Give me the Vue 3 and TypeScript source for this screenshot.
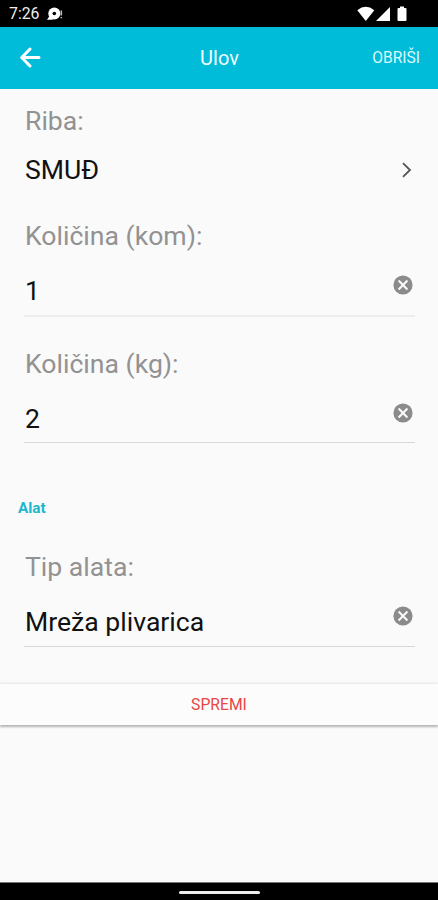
<script setup lang="ts">
import { reactive } from 'vue'

interface Field {
  id: string
  label: string
  value: string
}

const amounts = reactive<Field[]>([
  { id: 'pieces', label: 'Količina (kom):', value: '1' },
  { id: 'weight', label: 'Količina (kg):', value: '2' },
])
const tools = reactive<Field[]>([{ id: 'tool', label: 'Tip alata:', value: 'Mreža plivarica' }])

const groups = [
  { id: 'amounts', title: '', fields: amounts },
  { id: 'tools', title: 'Alat', fields: tools },
]

function clear(field: Field): void {
  field.value = ''
}
</script>

<template>
  <div class="screen">
    <div class="status">
      <span class="time">7:26</span>
      <svg class="notice" width="18" height="14" viewBox="0 0 18 14">
        <circle cx="7.3" cy="6.4" r="6" fill="#fff" />
        <path d="M0 12.8 2.6 9 6 12.8Z" fill="#fff" />
        <circle cx="7.3" cy="6.5" r="1.8" fill="#000" />
        <path d="M14.3 3.5v5M14.3 10v1.3" stroke="#bbb" stroke-width="1.6" />
      </svg>
      <svg class="signals" width="52" height="16" viewBox="0 0 52 16">
        <path d="M.3 4.2Q8.7-2.5 17.3 4.2L8.8 15Z" fill="#fff" />
        <path d="M33 1v14H19Z" fill="#fff" />
        <path d="M43 .5h4v1.6h1.5q1 0 1 1V14q0 1-1 1h-7q-1 0-1-1V3.1q0-1 1-1H43Z" fill="#fff" />
      </svg>
    </div>

    <header class="bar">
      <button class="back" type="button" aria-label="Natrag">
        <svg width="22" height="22" viewBox="0 0 22 22" fill="none" stroke="#fff" stroke-width="3" stroke-linecap="round" stroke-linejoin="round">
          <path d="M11 2 2.7 10.5l8.3 8.5M3 10.5h17" />
        </svg>
      </button>
      <h1 class="title">Ulov</h1>
      <button class="delete" type="button">OBRIŠI</button>
    </header>

    <main class="form">
      <div class="pick">
        <div class="label">Riba:</div>
        <div class="row">
          <span class="value">SMUĐ</span>
          <svg class="chevron" width="12" height="18" viewBox="0 0 12 18" fill="none" stroke="#555" stroke-width="1.8">
            <path d="M2 2.2 9 9l-7 6.8" />
          </svg>
        </div>
      </div>

      <section v-for="group in groups" :key="group.id" :class="['group', group.id]">
        <h2 v-if="group.title" class="heading">{{ group.title }}</h2>
        <div v-for="field in group.fields" :key="field.id" :class="['field', field.id]">
          <div class="label">{{ field.label }}</div>
          <div class="entry">
            <span class="value">{{ field.value }}</span>
            <button class="clear" type="button" aria-label="Obriši polje" @click="clear(field)">
              <svg width="20" height="20" viewBox="0 0 20 20">
                <circle cx="10" cy="10" r="9.6" fill="#8b8b8b" />
                <path d="m5.6 5.6 8.8 8.8m0-8.8-8.8 8.8" stroke="#fafafa" stroke-width="2.1" />
              </svg>
            </button>
          </div>
        </div>
      </section>

      <button class="save" type="button">SPREMI</button>
    </main>

    <div class="nav"><span class="pill"></span></div>
  </div>
</template>

<style>
body {
  margin: 0;
}
</style>

<style scoped>
.screen {
  display: flex;
  flex-direction: column;
  height: 900px;
  background: #fafafa;
  color: #111;
  font-family: Roboto, sans-serif;
  overflow: hidden;
}
button {
  padding: 0;
  border: 0;
  background: none;
  font-family: inherit;
}
svg {
  display: block;
}
.status {
  display: flex;
  align-items: center;
  box-sizing: border-box;
  height: 27px;
  padding: 1px 29px 0 9px;
  background: #000;
  color: #eee;
}
.time {
  width: 38px;
  font-size: 15.8px;
  line-height: 20px;
}
.signals {
  margin-left: auto;
}
.bar {
  display: grid;
  grid-template-columns: 80px 1fr 80px;
  align-items: center;
  box-sizing: border-box;
  height: 62px;
  padding: 0 18px 0 19px;
  background: #00bcd9;
  color: #f2fdff;
}
.title {
  margin: 0;
  text-align: center;
  font-size: 20px;
  font-weight: 400;
  line-height: 24px;
}
.delete {
  justify-self: end;
  color: #dcf8fc;
  font-size: 15.6px;
  line-height: 20px;
  white-space: nowrap;
}
.form {
  flex: 1;
}
.label,
.value {
  font-size: 26.6px;
  line-height: 32px;
  white-space: nowrap;
}
.label {
  color: #929292;
}
.pick {
  padding: 16px 24px 34px 25px;
}
.row {
  display: flex;
  align-items: center;
  justify-content: space-between;
  margin-top: 17px;
}
.chevron {
  margin-right: 1px;
}
.field {
  padding: 0 23px 31px 25px;
}
.entry {
  display: flex;
  justify-content: space-between;
  height: 40px;
  margin-top: 23px;
  margin-left: -1px;
  padding-left: 1px;
  border-bottom: 1px solid #d8d8d8;
}
.pieces .entry {
  border-bottom: 2px solid #ededed;
}
.weight .entry {
  height: 39px;
}
.clear {
  align-self: flex-start;
  margin-right: 2px;
}
.weight {
  padding-bottom: 0;
}
.heading {
  margin: 0;
  padding: 55px 18px 33px;
  color: #1cb6cd;
  font-size: 15.3px;
  font-weight: 700;
  line-height: 20px;
}
.tool {
  padding-bottom: 37px;
}
.save {
  display: block;
  width: 100%;
  height: 41px;
  background: #fcfcfc;
  box-shadow: 0 2px 2px #b4b4b4, 0 -1px 2px #e5e5e5;
  color: #e84545;
  font-size: 15.7px;
  line-height: 20px;
}
.nav {
  display: flex;
  justify-content: center;
  box-sizing: border-box;
  height: 18px;
  padding-top: 8px;
  border-top: 1px solid #777;
  background: #000;
}
.pill {
  width: 81px;
  height: 3px;
  border-radius: 2px;
  background: #eee;
}
</style>
